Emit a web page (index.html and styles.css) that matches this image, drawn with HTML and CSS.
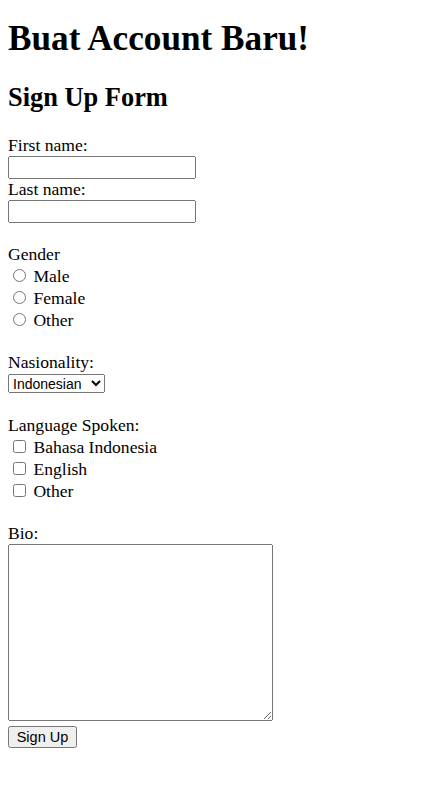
FILE: index.html
```html
<!DOCTYPE html>
<html>
<head>
<meta charset="utf-8">
<title>Sign Up</title>
<link rel="stylesheet" href="styles.css">
</head>
<body>
<h1 class="title">Buat Account Baru!</h1>
<h2 class="subtitle">Sign Up Form</h2>
<form class="form">
<label for="fname">First name:</label><br>
<input type="text" id="fname" class="text-input"><br>
<label for="lname">Last name:</label><br>
<input type="text" id="lname" class="text-input"><br><br>
<label>Gender</label><br>
<input type="radio" name="gender" id="male" class="choice"> <label for="male">Male</label><br>
<input type="radio" name="gender" id="female" class="choice"> <label for="female">Female</label><br>
<input type="radio" name="gender" id="other" class="choice"> <label for="other">Other</label><br><br>
<label for="nat">Nasionality:</label><br>
<select id="nat" class="select">
<option>Indonesian</option>
<option>Singaporean</option>
<option>Malaysian</option>
</select><br><br>
<label>Language Spoken:</label><br>
<input type="checkbox" id="l1" class="choice"> <label for="l1">Bahasa Indonesia</label><br>
<input type="checkbox" id="l2" class="choice"> <label for="l2">English</label><br>
<input type="checkbox" id="l3" class="choice"> <label for="l3">Other</label><br><br>
<label for="bio">Bio:</label><br>
<textarea id="bio" class="bio" cols="30" rows="10"></textarea><br>
<button type="submit" class="btn">Sign Up</button>
</form>
</body>
</html>
```
FILE: styles.css
```css
body {
  font-family: "Liberation Serif", "Times New Roman", serif;
  font-size: 17.6px;
  color: #000;
  background: #fff;
}
.title {
  margin-top: 10.5px;
}
.choice {
  margin: 4px 3px 0 5px;
}
.text-input {
  box-sizing: border-box;
  width: 188px;
  height: 23px;
  font-family: "Liberation Sans", Arial, sans-serif;
  font-size: 13.333px;
}
.select {
  box-sizing: border-box;
  width: 97px;
  height: 19px;
  font-family: "Liberation Sans", Arial, sans-serif;
  font-size: 14px;
}
.bio {
  box-sizing: border-box;
  width: 265px;
  height: 177px;
  font-family: "Liberation Mono", monospace;
  font-size: 13.333px;
}
.btn {
  box-sizing: border-box;
  width: 69px;
  height: 22px;
  font-family: "Liberation Sans", Arial, sans-serif;
  font-size: 14.5px;
}
```
